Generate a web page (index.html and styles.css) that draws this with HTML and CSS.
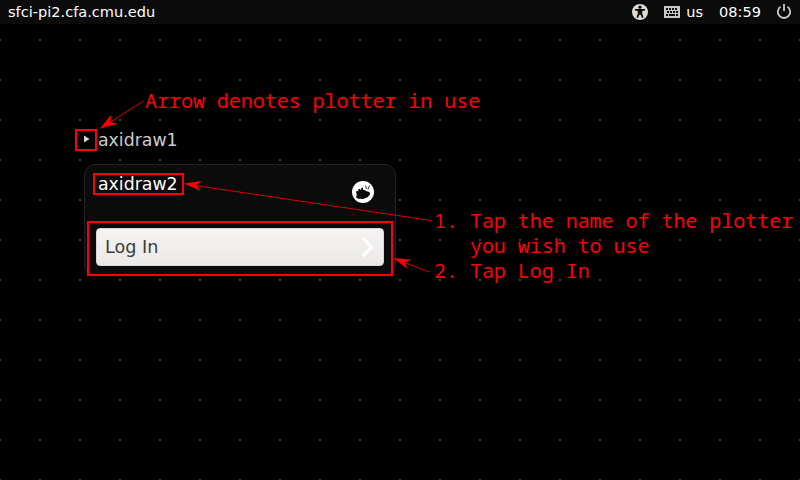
FILE: index.html
```
<!DOCTYPE html>
<html lang="en">
<head>
<meta charset="utf-8">
<title>Login</title>
<link rel="stylesheet" href="styles.css">
</head>
<body>
<header class="panel">
  <span class="host">sfci-pi2.cfa.cmu.edu</span>
  <div class="indicators">
    <svg class="access" width="16" height="16" viewBox="0 0 16 16"><circle cx="8" cy="8" r="8" fill="#dfdbd2"/><circle cx="8" cy="3.200" r="1.600" fill="#0b0b0b"/><path d="M3 5h10v1.500L10.200 7v2.500l1.300 4-1.500.5L8.500 10.500h-1L6 14l-1.500-.5 1.300-4V7L3 6.500z" fill="#0b0b0b"/></svg>
    <svg class="keyboard" width="16" height="12" viewBox="0 0 16 12"><rect width="16" height="12" rx=".5" fill="#c8c8c8"/><path d="M2 3h12M3 6h11M2 9h2M5 9h6M12 9h2" stroke="#0b0b0b" stroke-width="2" stroke-dasharray="2 1"/><path d="M5 9h6" stroke="#0b0b0b" stroke-width="2"/></svg>
    <span class="layout">us</span>
    <span class="clock">08:59</span>
    <svg class="power" width="16" height="16" viewBox="0 0 16 16" fill="none" stroke="#c8c8c8" stroke-width="1.800"><path d="M4.500 2.700A6.200 6.200 0 1 0 11.500 2.700M8 0v7"/></svg>
  </div>
</header>
<main class="greeter">
  <div class="user"><svg width="6" height="8" viewBox="0 0 6 8"><path d="M0 .5 5.500 4 0 7.500z" fill="#d8d8d8"/></svg><span>axidraw1</span></div>
  <section class="card">
    <div class="selected">
      <span>axidraw2</span>
      <svg width="22" height="22" viewBox="0 0 22 22"><circle cx="11" cy="11" r="11" fill="#fff"/><path d="M4 11 5 9.800l1.200.4.200-2 1.400-.4.900 1.500.8-2.500 1.300-.2.500 2.500L13 9.200l1.500 1 3 .8.500 2.500-2.500 2.800-4.500 1.700-4.500-.2L4 16.500l.8-2.500z" fill="#0b0b0b"/><path d="m13.500 4.500 1 3.500M17.500 4.500 16 8.500" stroke="#0b0b0b" stroke-width=".8"/></svg>
    </div>
    <button class="login"><span>Log In</span><svg width="14" height="22" viewBox="0 0 14 22"><path d="m1.500 1.500 9 9.500-9 9.500" fill="none" stroke="#fff" stroke-width="3"/></svg></button>
  </section>
</main>
<svg class="marks" width="800" height="480" viewBox="0 0 800 480">
  <g fill="none" stroke="#f00" stroke-width="2"><path d="M76 130h20v20H76zM94 174h89v20H94zM88 222h304v53H88z"/></g>
  <g fill="none" stroke="#f00" stroke-opacity=".85"><path d="M143.500 101 108 123.500M431 220.500 192 185M429 272 402 261.500"/></g>
  <g fill="#f00"><path d="M0 0 17-5.500 12.500 0 17 5.500z" transform="translate(100 128.500) rotate(-33)"/><path d="M0 0 17-5 12.500 0 17 5z" transform="translate(184 183.500) rotate(8)"/><path d="M0 0 17-5 12.500 0 17 5z" transform="translate(393.500 258) rotate(22)"/></g>
</svg>
<div class="note arrow-note">Arrow denotes plotter in use</div>
<div class="note steps">1. Tap the name of the plotter
   you wish to use
2. Tap Log In</div>
</body>
</html>
```
FILE: styles.css
```
* { box-sizing: border-box; }
body {
  margin: 0;
  width: 800px;
  height: 480px;
  overflow: hidden;
  position: relative;
  background: #000 url("data:image/svg+xml,%3Csvg xmlns='http://www.w3.org/2000/svg' width='40' height='40'%3E%3Crect width='2' height='2' fill='%23444'/%3E%3C/svg%3E") -1px -1px;
  font-family: "DejaVu Sans", sans-serif;
  font-size: 17.33px;
  color: #fff;
}
svg { display: block; }
.panel {
  height: 24px;
  padding: 0 8px;
  display: flex;
  align-items: center;
  justify-content: space-between;
  background: #0b0b0b;
  font-size: 14.55px;
  line-height: 24px;
}
.indicators { display: flex; align-items: center; }
.keyboard { margin-left: 16px; }
.layout { margin-left: 6px; }
.clock { margin: 0 15px 0 16px; }
.greeter { width: 312px; margin: 105px 0 0 84px; }
.user { height: 20px; display: flex; align-items: center; gap: 8px; color: #ccc; line-height: 20px; }
.user span { padding-top: 1px; }
.card {
  height: 112px;
  margin-top: 15px;
  padding: 8px 11px;
  border: 1px solid #222;
  border-radius: 11px;
  background: #0b0b0b;
}
.selected { height: 55px; display: flex; justify-content: space-between; padding: 0 10px 0 2px; line-height: 22px; }
.selected svg { margin-top: 8px; }
.login {
  width: 288px;
  height: 38px;
  display: flex;
  align-items: center;
  justify-content: space-between;
  padding: 0 8px;
  border: 1px solid #d8d6d4;
  border-radius: 4px;
  background: linear-gradient(#f5f4f2, #eae9e7);
  font: inherit;
  font-size: 17.6px;
  color: #3c3c3c;
}
.marks { position: absolute; left: 0; top: 0; }
.note {
  position: absolute;
  font: 20px/25px "Noto Sans Mono", "Droid Sans Mono", "DejaVu Sans Mono", monospace;
  letter-spacing: -.03px;
  white-space: pre;
  color: #f00;
}
.arrow-note { left: 145px; top: 88px; }
.steps { left: 434px; top: 208px; }
```
